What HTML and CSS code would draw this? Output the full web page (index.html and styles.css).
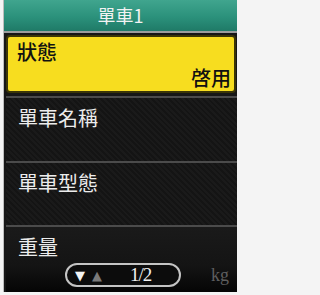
FILE: index.html
```html
<!DOCTYPE html>
<html lang="zh-Hant">
<head>
<meta charset="utf-8">
<link rel="stylesheet" href="styles.css">
</head>
<body>
<div class="screen">
  <div class="header">單車1</div>
  <div class="rule"></div>
  <div class="list">
    <div class="item selected">
      <div class="label">狀態</div>
      <div class="value">啓用</div>
    </div>
    <div class="row r1"><div class="label">單車名稱</div></div>
    <div class="row r2"><div class="label">單車型態</div></div>
    <div class="row r3">
      <div class="label">重量</div>
      <div class="footer">
        <div class="pill">
          <span class="down">▼</span>
          <span class="up">▲</span>
          <span class="page">1/2</span>
        </div>
        <span class="unit">kg</span>
      </div>
    </div>
  </div>
</div>
</body>
</html>
```
FILE: styles.css
```css
html, body {
  margin: 0;
  padding: 0;
}
body {
  width: 239px;
  height: 295px;
  background: #f4f4f4;
  overflow: hidden;
  font-family: "Noto Sans CJK TC", "Noto Sans CJK SC", sans-serif;
}
.screen {
  margin: 0 2px 0 3px;
  height: 292px;
  background: #171717;
  display: flex;
  flex-direction: column;
  border-left: 1px solid #bdbdbd;
  box-sizing: border-box;
}
.header {
  height: 31px;
  background: linear-gradient(#40a58e, #2b917b 55%, #1f7a67);
  color: #f2f2f2;
  font-size: 18px;
  line-height: 31px;
  text-align: center;
}
.rule {
  height: 2px;
  background: #9c9c9c;
}
.list {
  flex: 1;
  display: flex;
  flex-direction: column;
  padding: 2px 0 0 2px;
  background: #161616;
}
.item.selected {
  height: 58px;
  margin-right: 1px;
  box-sizing: border-box;
  background: #f7dd1f;
  border: 2px solid #3a3508;
  border-radius: 4px;
  display: flex;
  flex-direction: column;
  justify-content: space-between;
  padding: 3px 3px 1px 9px;
  color: #111;
}
.selected .label,
.selected .value {
  font-size: 20px;
  line-height: 24px;
  font-weight: 500;
}
.selected .value {
  align-self: flex-end;
}
.row {
  border-top: 2px solid #4b4b4b;
  padding: 8px 0 0 12px;
  box-sizing: border-box;
  background: repeating-linear-gradient(45deg, #1a1a1a 0 2px, #141414 2px 4px);
}
.row .label {
  color: #ececec;
  font-size: 20px;
  line-height: 24px;
}
.r1 { margin-top: 3px; height: 65px; }
.r2 { height: 64px; }
.r3 {
  flex: 1;
  display: flex;
  flex-direction: column;
  background: linear-gradient(#1a1a1a, #141414 60%, #050505);
}
.footer {
  margin-top: auto;
  margin-bottom: 5px;
  display: flex;
  align-items: center;
  padding-left: 47px;
}
.pill {
  width: 116px;
  height: 24px;
  box-sizing: border-box;
  border: 2px solid #c4c4c4;
  border-radius: 12px;
  background: #0c0c0c;
  display: flex;
  align-items: center;
  padding-left: 8px;
}
.down, .up {
  font-size: 13px;
  line-height: 1;
  font-family: "DejaVu Sans", sans-serif;
}
.down { color: #f4f4f4; }
.up { color: #7a7a7a; margin-left: 7px; }
.page {
  color: #f0f0f0;
  font-family: "Liberation Serif", serif;
  font-size: 19px;
  margin-left: 28px;
  letter-spacing: -1px;
}
.unit {
  margin-left: 30px;
  color: #5e5e5e;
  font-family: "Liberation Serif", serif;
  font-size: 18px;
  line-height: 1;
}
```
